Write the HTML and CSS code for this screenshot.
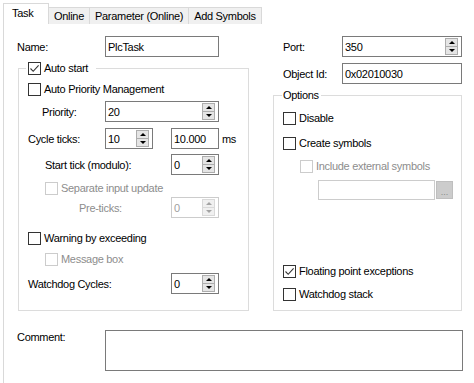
FILE: index.html
```html
<!DOCTYPE html>
<html>
<head>
<meta charset="utf-8">
<link rel="stylesheet" href="styles.css">
</head>
<body>
<div class="tabs">
  <div class="tab active">Task</div>
  <div class="tab">Online</div>
  <div class="tab">Parameter (Online)</div>
  <div class="tab">Add Symbols</div>
</div>
<div class="page">
  <div class="columns">
    <div class="left">
      <div class="row">
        <span class="label w-name">Name:</span>
        <div class="field w-wide"><span>PlcTask</span></div>
      </div>
      <fieldset class="group group-left">
        <legend class="legend-left"><span class="check-row"><span class="cb checked"><svg viewBox="0 0 11 11" width="11" height="11"><path d="M1.5 5.5 L4.2 8.3 L9.6 2.4" fill="none" stroke="#333" stroke-width="1.1"/></svg></span>Auto start</span></legend>
        <div class="check-row ind-a m8"><span class="cb"></span>Auto Priority Management</div>
        <div class="row m5">
          <span class="label ind-p w-pri">Priority:</span>
          <div class="field w-wide"><span>20</span><span class="spin"><span class="up"></span><span class="down"></span></span></div>
        </div>
        <div class="row m6">
          <span class="label ind-a w-cyc">Cycle ticks:</span>
          <div class="field w-small"><span>10</span><span class="spin"><span class="up"></span><span class="down"></span></span></div>
          <div class="field w-small gap18"><span>10.000</span></div>
          <span class="unit">ms</span>
        </div>
        <div class="row m5">
          <span class="label ind-b w-start">Start tick (modulo):</span>
          <div class="field w-small"><span>0</span><span class="spin"><span class="up"></span><span class="down"></span></span></div>
        </div>
        <div class="check-row ind-b m7 disabled"><span class="cb"></span>Separate input update</div>
        <div class="row m2 disabled">
          <span class="label ind-c w-pre">Pre-ticks:</span>
          <div class="field w-small"><span>0</span><span class="spin"><span class="up"></span><span class="down"></span></span></div>
        </div>
        <div class="check-row ind-a m14"><span class="cb"></span>Warning by exceeding</div>
        <div class="check-row ind-b m8 disabled"><span class="cb"></span>Message box</div>
        <div class="row m7">
          <span class="label ind-a w-wd">Watchdog Cycles:</span>
          <div class="field w-small"><span>0</span><span class="spin"><span class="up"></span><span class="down"></span></span></div>
        </div>
      </fieldset>
    </div>
    <div class="right">
      <div class="row">
        <span class="label ind-r w-port">Port:</span>
        <div class="field w-port-f"><span>350</span><span class="spin"><span class="up"></span><span class="down"></span></span></div>
      </div>
      <div class="row m6">
        <span class="label ind-r w-port">Object Id:</span>
        <div class="field w-port-f"><span>0x02010030</span></div>
      </div>
      <fieldset class="group group-right">
        <legend class="legend-right">Options</legend>
        <div class="check-row ind-o m10"><span class="cb"></span>Disable</div>
        <div class="check-row ind-o m12"><span class="cb"></span>Create symbols</div>
        <div class="check-row ind-o2 m10 disabled"><span class="cb"></span>Include external symbols</div>
        <div class="path-row">
          <div class="field path disabled-field"></div>
          <div class="dots-btn">...</div>
        </div>
        <div class="check-row ind-o m65"><span class="cb checked"><svg viewBox="0 0 11 11" width="11" height="11"><path d="M1.5 5.5 L4.2 8.3 L9.6 2.4" fill="none" stroke="#333" stroke-width="1.1"/></svg></span>Floating point exceptions</div>
        <div class="check-row ind-o m10"><span class="cb"></span>Watchdog stack</div>
      </fieldset>
    </div>
  </div>
  <div class="comment-row">
    <span class="label w-name comment-label">Comment:</span>
    <div class="comment-box"></div>
  </div>
</div>
</body>
</html>
```
FILE: styles.css
```css
html, body {
  margin: 0;
  padding: 0;
}
body {
  width: 474px;
  height: 383px;
  overflow: hidden;
  background: #fff;
  color: #000;
  font-family: "Liberation Sans", Arial, sans-serif;
  font-size: 11px;
  letter-spacing: -0.3px;
}

/* Tabs */
.tabs {
  display: flex;
  align-items: flex-end;
  height: 24px;
  padding-left: 3px;
  box-sizing: border-box;
}
.tab {
  height: 17px;
  line-height: 16px;
  padding: 0 5px;
  background: #f0f0f0;
  border: 1px solid #d9d9d9;
  border-left: none;
  border-bottom: none;
  box-sizing: border-box;
  white-space: nowrap;
}
.tab.active {
  width: 46px;
  height: 21px;
  line-height: 18px;
  padding: 0 0 0 8px;
  background: #fff;
  border-left: 1px solid #d9d9d9;
}

/* Page */
.page {
  margin-left: 3px;
  border-left: 1px solid #d9d9d9;
  height: 359px;
  box-sizing: border-box;
  padding-top: 12px;
}
.columns {
  display: flex;
  gap: 24px;
}
.left {
  width: 245px;
  padding-left: 13px;
  box-sizing: border-box;
}
.right {
  width: 189px;
}

.row {
  display: flex;
  align-items: center;
  height: 21px;
}
.label {
  flex: none;
  white-space: nowrap;
}
.w-name { width: 88px; }
.w-pri { width: 63px; }
.w-cyc { width: 77px; }
.w-start { width: 126px; }
.w-pre { width: 92px; }
.w-wd { width: 143px; }
.w-port { width: 59px; }

.ind-a { margin-left: 9px; }
.ind-p { margin-left: 23px; }
.ind-b { margin-left: 26px; }
.ind-c { margin-left: 60px; }
.ind-r { padding-left: 10px; box-sizing: border-box; width: 69px; }
.ind-o { margin-left: 9px; }
.ind-o2 { margin-left: 26px; }

.m2 { margin-top: 2px; }
.m5 { margin-top: 5px; }
.m6 { margin-top: 6px; }
.m7 { margin-top: 7px; }
.m8 { margin-top: 8px; }
.m10 { margin-top: 10px; }
.m12 { margin-top: 12px; }
.m14 { margin-top: 14px; }
.m65 { margin-top: 65px; }

/* Fields */
.field {
  flex: none;
  height: 21px;
  border: 1px solid #7a7a7a;
  box-sizing: border-box;
  display: flex;
  align-items: center;
  padding-left: 2px;
  background: #fff;
}
.w-wide { width: 114px; }
.w-small { width: 48px; }
.w-port-f { width: 120px; }
.gap18 { margin-left: 18px; }
.unit { margin-left: 3px; }

.spin {
  margin-left: auto;
  margin-right: 3px;
  width: 13px;
  height: 17px;
  display: flex;
  flex-direction: column;
  border: 1px solid #adadad;
  background: #e5e5e5;
  box-sizing: border-box;
}
.spin span {
  flex: 1;
  display: flex;
  align-items: center;
  justify-content: center;
}
.spin .up {
  border-bottom: 1px solid #adadad;
}
.spin .up::before {
  content: "";
  border-left: 3px solid transparent;
  border-right: 3px solid transparent;
  border-bottom: 3px solid #000;
}
.spin .down::before {
  content: "";
  border-left: 3px solid transparent;
  border-right: 3px solid transparent;
  border-top: 3px solid #000;
}

/* Checkboxes */
.check-row {
  display: flex;
  align-items: center;
  height: 13px;
  line-height: 13px;
  white-space: nowrap;
}
.cb {
  flex: none;
  width: 13px;
  height: 13px;
  border: 1px solid #333;
  box-sizing: border-box;
  background: #fff;
  margin-right: 3px;
  display: flex;
  align-items: center;
  justify-content: center;
}
.cb svg { display: block; }

/* Disabled */
.disabled { color: #8d8d8d; }
.disabled .cb { border-color: #cccccc; }
.disabled .field { border-color: #cccccc; color: #a0a0a0; }
.disabled .spin { border-color: #d9d9d9; background: #f0f0f0; }
.disabled .spin .up { border-bottom-color: #d9d9d9; }
.disabled .spin .up::before { border-bottom-color: #a3a3a3; }
.disabled .spin .down::before { border-top-color: #a3a3a3; }

/* Group boxes */
.group {
  margin: 0;
  padding: 0;
  border: 1px solid #dcdcdc;
  box-sizing: border-box;
  min-width: 0;
}
.group-left {
  margin: 5px 0 0 1px;
  width: 231px;
  padding-bottom: 16px;
}
.group-right {
  margin-top: 5px;
  width: 189px;
  padding-bottom: 9px;
}
.legend-left {
  margin-left: 7px;
  padding: 0 8px 0 2px;
  height: 13px;
  line-height: 13px;
}
.legend-right {
  margin-left: 8px;
  padding: 0 2px 0 1px;
  height: 13px;
  line-height: 13px;
}

.path-row {
  display: flex;
  align-items: center;
  margin-top: 7px;
  margin-left: 44px;
}
.path {
  width: 117px;
  height: 20px;
}
.disabled-field { border-color: #cccccc; }
.dots-btn {
  width: 17px;
  height: 18px;
  margin-left: 1px;
  background: #cccccc;
  border: 1px solid #bfbfbf;
  box-sizing: border-box;
  color: #8a8a8a;
  font-size: 9px;
  letter-spacing: 0;
  line-height: 20px;
  text-align: center;
}

/* Comment */
.comment-row {
  display: flex;
  margin-top: 19px;
  padding-left: 13px;
}
.comment-label {
  padding-top: 1px;
  line-height: 13px;
}
.comment-box {
  width: 358px;
  height: 41px;
  border: 1px solid #7a7a7a;
  box-sizing: border-box;
  background: #fff;
}
```
